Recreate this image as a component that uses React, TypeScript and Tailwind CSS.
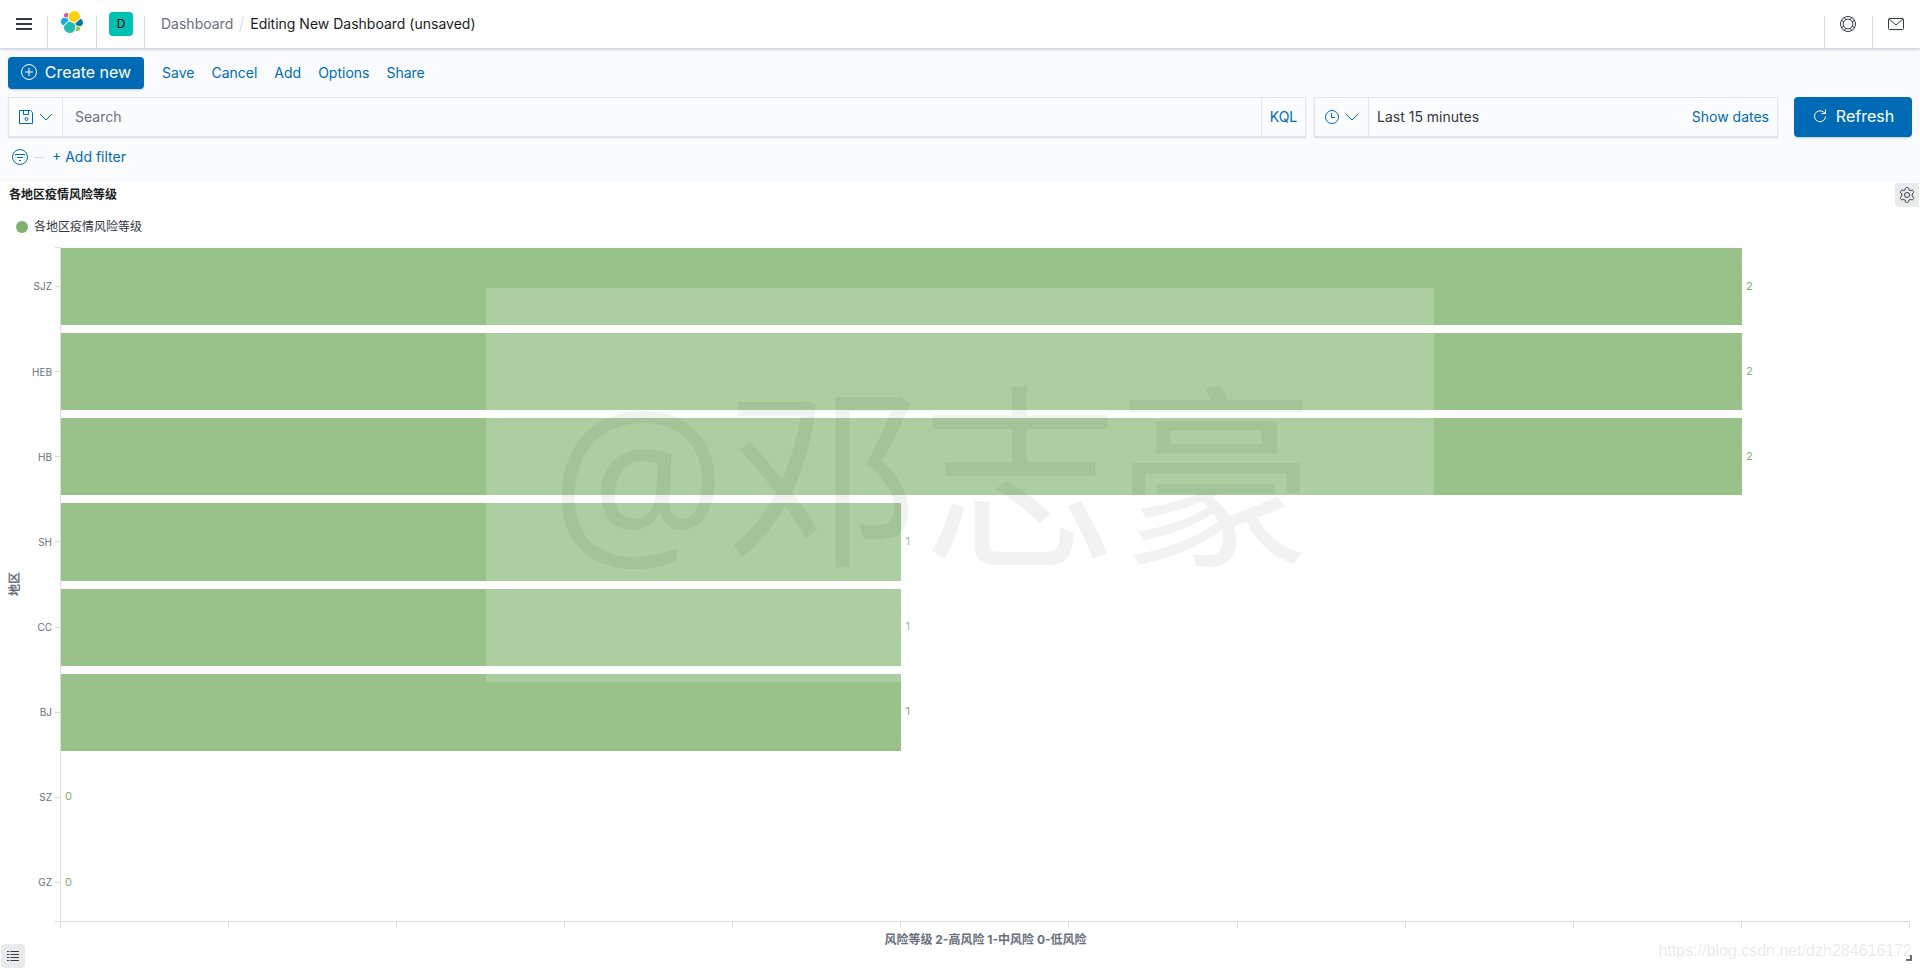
import type { ReactNode } from "react";

const menu = ["Save", "Cancel", "Add", "Options", "Share"];

const regions = [
  { name: "SJZ", level: 2 },
  { name: "HEB", level: 2 },
  { name: "HB", level: 2 },
  { name: "SH", level: 1 },
  { name: "CC", level: 1 },
  { name: "BJ", level: 1 },
  { name: "SZ", level: 0 },
  { name: "GZ", level: 0 },
];

const AXIS_MAX = 2.2;
const AXIS_TICKS = 12;

function Icon({ children, className = "size-4" }: { children: ReactNode; className?: string }) {
  return (
    <svg
      viewBox="0 0 16 16"
      fill="none"
      stroke="currentColor"
      aria-hidden="true"
      className={`shrink-0 ${className}`}
    >
      {children}
    </svg>
  );
}

function ElasticLogo() {
  return (
    <svg viewBox="0 0 32 32" className="size-6" aria-hidden="true">
      <path
        fill="#FED10A"
        d="M12.58 13.787l7.002 3.211 7.066-6.213a7.849 7.849 0 00.152-1.557c0-4.287-3.464-7.775-7.722-7.775a7.72 7.72 0 00-6.36 3.384l-1.176 6.125 1.038 2.825z"
      />
      <path
        fill="#24BBB1"
        d="M5.333 21.228A7.964 7.964 0 005.18 22.8c0 4.3 3.485 7.798 7.768 7.798a7.75 7.75 0 006.422-3.42l1.166-6.107-1.556-2.991-7.03-3.22-6.617 6.368z"
      />
      <path fill="#EF5098" d="M5.29 9.093l4.8 1.137 1.05-5.48a3.798 3.798 0 00-2.3-.777 3.823 3.823 0 00-3.55 5.12z" />
      <path
        fill="#17A8E0"
        d="M4.872 10.24c-2.144.71-3.6 2.78-3.6 5.05 0 2.21 1.36 4.18 3.4 4.96l6.735-6.12-1.236-2.656-5.3-1.234z"
      />
      <path
        fill="#93C83E"
        d="M20.873 27.182a3.78 3.78 0 002.282.777 3.83 3.83 0 003.828-3.823c0-.44-.075-.87-.22-1.286l-4.796-1.127-1.094 5.459z"
      />
      <path fill="#0779A1" d="M21.848 20.563l5.279 1.24c2.145-.71 3.6-2.78 3.6-5.06a5.32 5.32 0 00-3.41-4.957l-6.904 6.08 1.435 2.697z" />
    </svg>
  );
}

function ChevronDown() {
  return (
    <Icon>
      <path d="M2 5l6 6 6-6" />
    </Icon>
  );
}

function Header() {
  return (
    <header className="relative z-10 flex h-[49px] items-end border-b border-[#d3dae6] bg-white shadow-[0_2px_2px_-1px_rgba(152,162,179,0.3),0_1px_5px_-2px_rgba(152,162,179,0.3)]">
      <button aria-label="Menu" className="flex h-12 w-[47px] items-center pl-4">
        <svg viewBox="0 0 16 12" className="h-3 w-4" fill="#343741" aria-hidden="true">
          <path d="M0 0h16v2H0zM0 5h16v2H0zM0 10h16v2H0z" />
        </svg>
      </button>
      <a href="#" aria-label="Elastic" className="flex h-8 w-[49px] items-end border-l border-[#d3dae6] pb-3.5 pl-3">
        <ElasticLogo />
      </a>
      <div className="h-8 w-12 border-l border-[#d3dae6] pl-3">
        <button className="-mt-1 flex size-6 items-center justify-center rounded bg-[#00bfb3] text-xs text-black">
          D
        </button>
      </div>
      <nav aria-label="Breadcrumb" className="flex h-8 flex-1 border-l border-[#d3dae6] pl-4 leading-4">
        <a href="#" className="text-[#69707d]">
          Dashboard
        </a>
        <span className="mx-2 h-4 w-px rotate-12 bg-[#d3dae6]" />
        <span className="text-[#1a1c21]">Editing New Dashboard (unsaved)</span>
      </nav>
      <button aria-label="Help" className="flex h-8 w-12 border-l border-[#d3dae6] pl-[15px] text-[#343741]">
        <Icon>
          <circle cx="8" cy="8" r="7.5" />
          <circle cx="8" cy="8" r="4.8" />
          <path d="M4.200 1.500l2 2.500M1.500 4.200l2.500 2M11.800 1.500l-2 2.500M14.500 4.200l-2.500 2M4.200 14.500l2-2.500M1.500 11.800l2.500-2M11.800 14.500l-2-2.500M14.500 11.800l-2.500-2" />
        </Icon>
      </button>
      <button aria-label="News" className="flex h-8 w-12 border-l border-[#d3dae6] pl-[15px] text-[#343741]">
        <Icon>
          <rect x=".5" y="2.5" width="15" height="11" rx="1" />
          <path d="M1 3l7 6 7-6" />
        </Icon>
      </button>
    </header>
  );
}

function QueryBar() {
  const field =
    "flex h-10 items-stretch border border-[#e0e5ee] bg-[#fbfcfd] shadow-[0_1px_1px_rgba(152,162,179,0.3)]";

  return (
    <div className="mt-2 flex">
      <div className={`${field} flex-1`}>
        <button aria-label="Saved queries" className="flex w-[54px] items-center justify-center gap-1 border-r border-[#e0e5ee] text-[#006bb4]">
          <Icon>
            <path d="M1.5 1.5h10.8l2.2 2.2v10.8h-13zM5.500 1.5v4h5v-4" />
            <circle cx="8.500" cy="10" r="1.5" />
          </Icon>
          <ChevronDown />
        </button>
        <input
          aria-label="Search"
          placeholder="Search"
          className="min-w-0 flex-1 bg-transparent px-3 text-[#343741] outline-none placeholder:text-[#69707d]"
        />
        <button className="w-11 border-l border-[#e0e5ee] text-[#006bb4]">KQL</button>
      </div>
      <div className={`${field} ml-2 w-[464px]`}>
        <button aria-label="Quick time ranges" className="flex w-[54px] items-center justify-center gap-1 border-r border-[#e0e5ee] text-[#006bb4]">
          <Icon>
            <circle cx="8" cy="8" r="6.5" />
            <path d="M7.5 4v4.5H11" />
          </Icon>
          <ChevronDown />
        </button>
        <button className="flex flex-1 items-center justify-between px-2 text-[#343741]">
          <span>Last 15 minutes</span>
          <span className="text-[#006bb4]">Show dates</span>
        </button>
      </div>
      <button className="ml-4 flex h-10 w-[118px] items-center justify-center gap-2 rounded bg-[#006bb4] pb-0.5 text-base text-white shadow-[0_2px_2px_-1px_rgba(54,97,126,0.3)]">
        <Icon>
          <path d="M13.5 8.5A5.5 5.5 0 1 1 11.5 4l2 1.5M13.5 1.5v4h-4" />
        </Icon>
        Refresh
      </button>
    </div>
  );
}

function Toolbar() {
  return (
    <div className="bg-[#fafbfd] px-2 pt-2 pb-[15px]">
      <div className="flex items-center">
        <button className="flex h-8 w-[136px] items-center justify-center gap-2 rounded bg-[#006bb4] pb-0.5 text-base text-white shadow-[0_2px_2px_-1px_rgba(54,97,126,0.3)]">
          <Icon>
            <circle cx="8" cy="8" r="7.5" />
            <path d="M8 4v8M4 8h8" />
          </Icon>
          Create new
        </button>
        <div className="ml-[18px] flex gap-[17px] text-[#006bb4]">
          {menu.map((item) => (
            <button key={item}>{item}</button>
          ))}
        </div>
      </div>
      <QueryBar />
      <div className="mt-2.5 flex h-5 items-center pl-1 text-[#006bb4]">
        <button aria-label="Filter options">
          <Icon>
            <circle cx="8" cy="8" r="7.5" />
            <path d="M3 5.5h10M5 8.5h6M7 11.5h2" />
          </Icon>
        </button>
        <span className="mr-2 ml-1.5 h-px w-2.5 bg-[#d3dae6]" />
        <button>+ Add filter</button>
      </div>
    </div>
  );
}

function Bars() {
  return (
    <div className="flex flex-1 flex-col gap-2">
      {regions.map(({ name, level }) => (
        <div key={name} className="flex flex-1 items-stretch">
          <div className="flex w-[37px] items-center justify-end gap-[3px] text-[10px] text-[#69707d]">
            {name}
            <span className="h-px w-1.5 bg-[#dcdcdc]" />
          </div>
          <div className="flex flex-1 items-center">
            <div
              className="h-full bg-[#98c28a]"
              style={{ width: `${(level / AXIS_MAX) * 100}%` }}
            />
            <span className="ml-1 text-[11px] text-[#7eb26d]">{level}</span>
          </div>
        </div>
      ))}
    </div>
  );
}

function Chart() {
  return (
    <div className="flex flex-1 pr-2.5">
      <div className="flex w-6 items-center justify-end pb-7">
        <span className="rotate-180 text-xs leading-[18px] font-bold text-[#69707d] [text-orientation:sideways] [writing-mode:vertical-rl]">
          地区
        </span>
      </div>
      <div className="flex flex-1 flex-col">
        <div className="relative flex flex-1 pt-px">
          <Bars />
          <div className="absolute inset-y-0 left-[31px] w-1.5 border-t border-r border-[#dcdcdc]" />
        </div>
        <div className="ml-[31px] border-t border-[#dcdcdc] pl-[5px]">
          <div className="flex h-1.5 justify-between">
            {Array.from({ length: AXIS_TICKS }, (_, i) => (
              <span key={i} className="w-px bg-[#dcdcdc]" />
            ))}
          </div>
        </div>
        <p className="mt-0.5 ml-[37px] text-center text-xs leading-5 font-bold text-[#69707d]">
          风险等级 2-高风险 1-中风险 0-低风险
        </p>
      </div>
    </div>
  );
}

function Panel() {
  return (
    <section className="flex flex-1 flex-col pt-px pb-[19px]">
      <div className="flex h-6 items-center justify-between pr-px pl-[9px]">
        <h2 className="text-xs font-bold text-[#1a1c21]">各地区疫情风险等级</h2>
        <button aria-label="Panel options" className="flex size-6 items-center justify-center rounded-l bg-[#e9eaec] text-[#343741]">
          <Icon>
            <path
              strokeLinejoin="round"
              d="M6.500 1.300Q6.700.500 7.500.500h1q.800 0 1 .800l.400 1.500 1.400.800 1.500-.400q.800-.200 1.200.500l.500.900q.400.700-.200 1.200L13.200 7v2l1.100 1.200q.600.500.200 1.200l-.500.900q-.400.700-1.200.500l-1.500-.400-1.400.800-.400 1.500q-.200.800-1 .800h-1q-.800 0-1-.800l-.400-1.500-1.400-.800-1.500.400q-.800.200-1.200-.500l-.500-.900q-.400-.700.200-1.200L2.800 9V7L1.700 5.800q-.600-.500-.200-1.200l.500-.900q.400-.700 1.200-.500l1.500.400 1.400-.800z"
            />
            <circle cx="8" cy="8" r="2.5" />
          </Icon>
        </button>
      </div>
      <div className="mt-2.5 mb-2.5 flex h-5 items-center gap-1.5 pl-4 text-xs text-[#343741]">
        <span className="size-3 rounded-full bg-[#7eb26d]" />
        各地区疫情风险等级
      </div>
      <Chart />
    </section>
  );
}

export default function App() {
  return (
    <div className="relative flex min-h-screen flex-col overflow-hidden bg-white font-['Inter','Noto_Sans_CJK_SC',sans-serif] text-sm">
      <Header />
      <Toolbar />
      <Panel />
      <button aria-label="Legend" className="absolute bottom-px left-px flex size-6 items-center justify-center rounded bg-[#e9eaec] text-[#343741]">
        <Icon className="size-3">
          <path strokeWidth="1.300" d="M0 2h3M4.500 2H16M0 6h3M4.500 6H16M0 10h3M4.500 10H16M0 14h3M4.500 14H16" />
        </Icon>
      </button>
      <div className="pointer-events-none absolute top-1/2 left-1/2 flex h-[394px] w-[948px] -translate-1/2 items-center justify-center bg-white/20 pr-14 pb-5 font-['Open_Sans','Noto_Sans_CJK_SC',sans-serif] text-[196px] leading-none text-black/5">
        @邓志豪
      </div>
      <span className="absolute right-2 bottom-2 size-1.5 border-r-2 border-b-2 border-[#69707d]" />
      <span className="absolute right-2 bottom-1.5 font-['Liberation_Sans',sans-serif] text-base text-black/10">
        https://blog.csdn.net/dzh284616172
      </span>
    </div>
  );
}
